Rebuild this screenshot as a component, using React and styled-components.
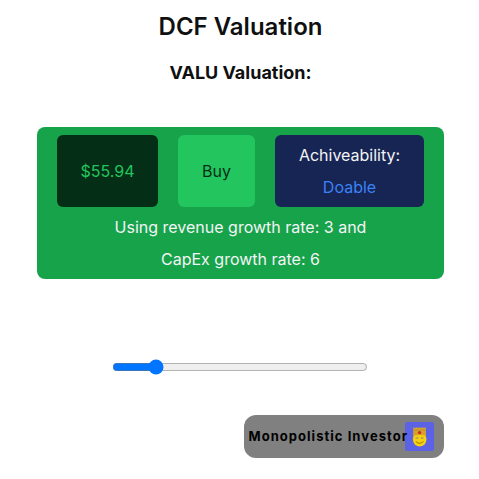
import React, {useState} from 'react'
import styled, {createGlobalStyle} from 'styled-components'

const COLORS = {
  TEXT: '#0f1011',
  GREEN_600: '#16a34a',
  GREEN_500: '#22c55e',
  GREEN_950: '#052e16',
  BLUE_950: '#172554',
  BLUE_500: '#3b82f6',
  LIGHT: '#f3f4f6',
}

const GlobalStyle = createGlobalStyle`
  * {
    box-sizing: border-box;
  }

  body {
    margin: 0;
    background-color: #fff;
    color: ${COLORS.TEXT};
    font-family: Inter, 'Liberation Sans', sans-serif;
    font-size: 16px;
    line-height: 32px;
  }
`

const Page = styled.main`
  width: 407px;
  height: 479px;
  margin-left: 37px;
  display: flex;
  flex-direction: column;
  align-items: center;
  overflow: hidden;
`

const Title = styled.h1`
  margin: 11px 0 0;
  font-size: 24px;
  line-height: 32px;
  font-weight: 600;
`

const Subtitle = styled.h2`
  margin: 16px 0 0;
  font-size: 18px;
  line-height: 28px;
  font-weight: 700;
`

const ValuationCard = styled.section`
  width: 100%;
  margin-top: 40px;
  padding: 8px 20px;
  border-radius: 8px;
  background-color: ${COLORS.GREEN_600};
  color: ${COLORS.LIGHT};
  text-align: center;
`

const Results = styled.div`
  display: flex;
  justify-content: space-between;
  height: 72px;
`

const Result = styled.div`
  width: ${(props) => props.$width};
  display: flex;
  flex-direction: column;
  align-items: center;
  justify-content: center;
  border-radius: 6px;
  white-space: nowrap;
  background-color: ${(props) => props.$bg};
  color: ${(props) => props.$color};
`

const Highlight = styled.span`
  color: ${COLORS.BLUE_500};
`

const Assumption = styled.p`
  width: 264px;
  margin: 4px auto -4px;
`

const Slider = styled.input`
  width: 256px;
  height: 16px;
  margin: 80px 1px 0 0;
`

const Badge = styled.footer`
  align-self: flex-end;
  width: 200px;
  height: 43px;
  margin-top: 40px;
  padding-left: 4.5px;
  display: flex;
  align-items: center;
  border-radius: 12px;
  background-color: #808080;
  color: #000;
  font-size: 13px;
  font-weight: 700;
  letter-spacing: 1.04px;
  white-space: nowrap;
`

const BadgeLabel = styled.span`
  width: 156.5px;
  padding-bottom: 1px;
  position: relative;
  z-index: 1;
`

const Logo = () => (
  <svg width="29" height="29" viewBox="0 0 29 29" aria-hidden="true">
    <rect width="29" height="29" rx="2" fill="#5b62e6" />
    <path d="M8.3 5.3 10 6 11.5 5.3 13 6 14.5 5.3 16 6 17.5 5.3 19 6 20.9 5.3V17H8.3Z" fill="#d4a52c" />
    <path d="M9 8H20.5" stroke="#b98428" strokeWidth="0.7" />
    <circle cx="14.7" cy="17.6" r="6.8" fill="#f6d20e" />
    <path d="M8.5 13.6Q14.7 12.2 20.7 13.6V10.5H8.5Z" fill="#d6a02a" />
    <circle cx="14.6" cy="10.6" r="1.7" fill="#d52a1b" />
    <ellipse cx="12" cy="16" rx="1.7" ry="1.1" fill="#b5a35a" />
    <ellipse cx="17.2" cy="16" rx="1.7" ry="1.1" fill="#b5a35a" />
    <path d="M10.8 19.5Q14.7 23 18.5 19.5" fill="none" stroke="#92700c" strokeWidth="0.9" />
  </svg>
)

const App = () => {
  const [rate, setRate] = useState(3)

  return (
    <>
      <GlobalStyle />
      <Page>
        <Title>DCF Valuation</Title>
        <Subtitle>VALU Valuation:</Subtitle>
        <ValuationCard>
          <Results>
            <Result $width="101px" $bg={COLORS.GREEN_950} $color={COLORS.GREEN_500}>
              $55.94
            </Result>
            <Result $width="77px" $bg={COLORS.GREEN_500} $color={COLORS.GREEN_950}>
              Buy
            </Result>
            <Result $width="149px" $bg={COLORS.BLUE_950} $color={COLORS.LIGHT}>
              <span>Achiveability:</span>
              <Highlight>Doable</Highlight>
            </Result>
          </Results>
          <Assumption>
            {`Using revenue growth rate: ${rate} and CapEx growth rate: 6`}
          </Assumption>
        </ValuationCard>
        <Slider
          type="range"
          min="0"
          max="20"
          value={rate}
          onChange={(e) => setRate(Number(e.target.value))}
        />
        <Badge>
          <BadgeLabel>Monopolistic Investor</BadgeLabel>
          <Logo />
        </Badge>
      </Page>
    </>
  )
}

export default App
